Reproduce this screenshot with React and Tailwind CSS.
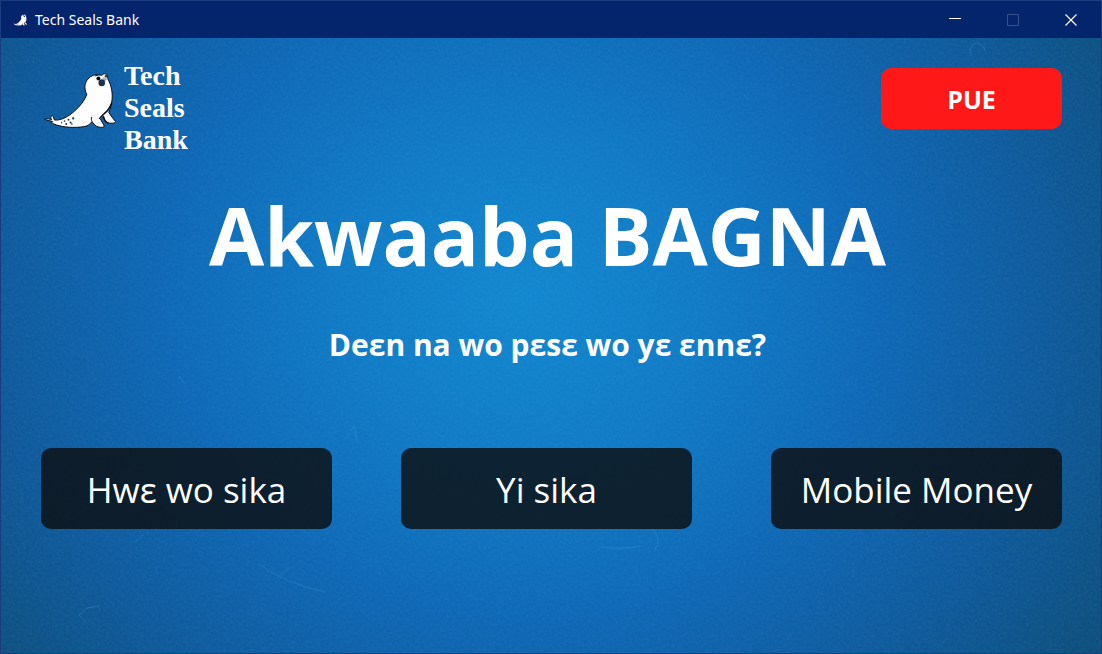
import React from "react";

function Seal({ className }) {
  return (
    <svg viewBox="24 34 220 176" className={className} aria-hidden="true">
      <path
        d="M50 186 C44 182 34 184 26 178 C34 176 42 178 47 180 C43 175 44 169 49 167 C54 171 53 178 56 181 C78 182 98 170 116 154 C134 138 146 122 153 104 C146 90 145 74 153 62 C162 49 174 43 188 45 L198 46 C203 40 212 40 215 46 C216 50 214 52 216 56 C228 78 231 100 229 120 C228 134 224 146 219 158 C225 168 234 178 240 186 C236 192 224 192 214 188 C208 184 206 176 203 170 C200 174 196 176 194 178 C198 186 204 194 206 200 C200 205 188 203 181 199 C176 196 172 189 169 186 C164 190 160 196 152 199 C130 205 92 204 70 198 C58 195 50 192 46 188 Z"
        fill="#fff"
        stroke="#080b12"
        strokeWidth="3"
        strokeLinejoin="round"
      />
      <path d="M228 128 C224 146 216 156 204 164 C200 170 196 174 190 177 C195 170 200 165 206 160 C216 151 223 141 228 128 Z" fill="#080b12" stroke="#080b12" strokeWidth="3" />
      <path d="M169 186 C166 180 166 176 168 172" fill="none" stroke="#080b12" strokeWidth="3" />
      <path d="M203 170 C205 182 210 188 218 190" fill="none" stroke="#080b12" strokeWidth="4" />
      <path d="M178 48 L186 46" stroke="#080b12" strokeWidth="3" />
      <ellipse cx="188" cy="56" rx="6" ry="6" fill="#080b12" />
      <ellipse cx="211" cy="49" rx="4" ry="4" fill="#30363e" />
      <path d="M192 60 L206 52 L215 57 L208 64 Z" fill="#a9adb1" />
      <circle cx="198" cy="69" r="10" fill="#1c3050" />
      <g fill="#1c3050">
        <circle cx="112" cy="176" r="3.5" />
        <circle cx="98" cy="180" r="3" />
        <circle cx="104" cy="188" r="3" />
        <circle cx="91" cy="193" r="3" />
        <circle cx="86" cy="184" r="2.5" />
        <circle cx="108" cy="193" r="2.5" />
        <circle cx="77" cy="189" r="2" />
      </g>
    </svg>
  );
}

function Backdrop() {
  return (
    <svg
      className="pointer-events-none absolute inset-0 -z-10 h-full w-full"
      viewBox="0 0 1100 615"
      preserveAspectRatio="none"
      aria-hidden="true"
    >
      <defs>
        <radialGradient id="glow" gradientUnits="userSpaceOnUse" cx="0" cy="0" r="1" gradientTransform="translate(520 260) rotate(8) scale(720 640)">
          <stop offset="0" stopColor="#1287cf" />
          <stop offset="0.25" stopColor="#117ac6" />
          <stop offset="0.5" stopColor="#0f67b5" />
          <stop offset="0.75" stopColor="#0f5899" />
          <stop offset="1" stopColor="#0e4b74" />
        </radialGradient>
        <filter id="grain" x="0" y="0" width="100%" height="100%">
          <feTurbulence type="fractalNoise" baseFrequency="0.35" numOctaves="3" seed="7" />
          <feColorMatrix values="0 0 0 0 0.1  0 0 0 0 0.6  0 0 0 0 0.8  0.9 0.3 0 0 -0.4" />
        </filter>
      </defs>
      <rect width="1100" height="615" fill="url(#glow)" />
      <rect width="1100" height="615" filter="url(#grain)" opacity="0.16" />
      <g fill="none" stroke="#3fa4d8" strokeWidth="1" strokeLinecap="round" opacity="0.3">
        <path d="M258 526 Q285 546 324 554" />
        <path d="M276 540 L288 530" />
        <path d="M970 18 Q967 6 976 5 Q983 6 984 13" />
        <path d="M78 577 L86 570 L98 568" />
        <path d="M78 577 L84 583" />
        <path d="M640 508 Q620 512 600 509" />
        <path d="M650 490 Q662 500 654 512" />
        <path d="M345 400 L353 388 L356 404" />
        <path d="M178 338 L184 346" />
        <path d="M133 505 L142 497" />
        <path d="M743 57 L748 62" />
      </g>
    </svg>
  );
}

function WindowBar() {
  const control = "flex h-full w-[58px] items-center justify-center";
  return (
    <header className="flex h-[37px] shrink-0 items-center bg-[#04246c] text-white">
      <Seal className="ml-[11px] h-3 w-4" />
      <span className="ml-[7px] font-['Noto_Sans','Open_Sans',sans-serif] text-[14px] leading-5">Tech Seals Bank</span>
      <div className="ml-auto flex h-full pr-px">
        <button type="button" aria-label="Minimize" className={control}>
          <svg width="12" height="12" viewBox="0 0 12 12" shapeRendering="crispEdges"><path d="M0 4.5H12" stroke="#fff" /></svg>
        </button>
        <button type="button" aria-label="Maximize" disabled className={control}>
          <svg width="12" height="12" viewBox="0 0 12 12"><path d="M.5 .5H11.5V11.5H.5Z" fill="none" stroke="#36508a" /></svg>
        </button>
        <button type="button" aria-label="Close" className={control}>
          <svg width="12" height="12" viewBox="0 0 12 12"><path d="M.5 .5L11.5 11.5M11.5 .5L.5 11.5" stroke="#fff" strokeWidth="1.2" /></svg>
        </button>
      </div>
    </header>
  );
}

function Option({ children }) {
  return (
    <button
      type="button"
      className="h-[81px] w-[291px] rounded-[10px] bg-[#0d0d0d]/80 pt-[2px] text-[35px] leading-[48px] whitespace-nowrap text-white"
    >
      {children}
    </button>
  );
}

export default function App() {
  return (
    <div className="flex min-h-screen flex-col border border-[#1c3c80] font-['Open_Sans','Noto_Sans',sans-serif]">
      <WindowBar />
      <main className="relative isolate flex-1 pt-[30px] pr-[39px] pb-10 pl-10 text-white">
        <Backdrop />
        <div className="flex items-start justify-between">
          <div className="flex items-start">
            <Seal className="mt-[3px] ml-[3px] h-[59px] w-[73px]" />
            <p className="-mt-2 ml-[7px] font-['Liberation_Serif',serif] text-[28px] leading-8 font-bold">
              Tech
              <br />
              Seals
              <br />
              Bank
            </p>
          </div>
          <button type="button" className="h-[61px] w-[181px] rounded-[10px] bg-[#ff1818] pt-px text-[25px] leading-8 font-bold">
            PUE
          </button>
        </div>
        <div className="pr-2 text-center font-bold">
          <h1 className="mt-8 text-[80px] leading-[94px]">Akwaaba BAGNA</h1>
          <p className="mt-[43px] text-[30px] leading-10">Deɛn na wo pɛsɛ wo yɛ ɛnnɛ?</p>
        </div>
        <div className="mt-[83px] grid grid-cols-[360fr_370fr_291fr]">
          <Option>Hwɛ wo sika</Option>
          <Option>Yi sika</Option>
          <Option>Mobile Money</Option>
        </div>
      </main>
    </div>
  );
}
